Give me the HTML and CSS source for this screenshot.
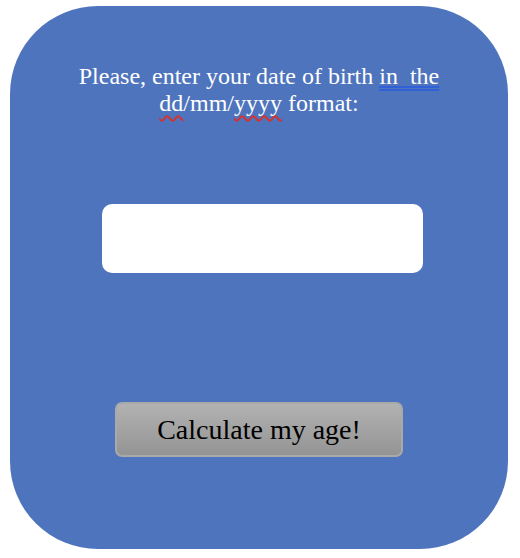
FILE: index.html
```html
<!DOCTYPE html>
<html lang="en">
<head>
  <meta charset="UTF-8">
  <title>Age Calculator</title>
  <link rel="stylesheet" href="styles.css">
</head>
<body>
  <div class="card">
    <p class="prompt">
      Please, enter your date of birth <span class="grammar">in&nbsp; the</span><br>
      <span class="spell">dd</span>/mm/<span class="spell">yyyy</span> format:
    </p>

    <input type="text" class="date-input" id="birth-date">

    <button class="calc-btn" onclick="calculate()">Calculate my age!</button>
  </div>

  <script>
    function calculate() {
      const value = document.getElementById('birth-date').value;
      const parts = value.split('/');
      if (parts.length !== 3) return;
      const born = new Date(parts[2], parts[1] - 1, parts[0]);
      const age = Math.floor((Date.now() - born) / (365.25 * 24 * 3600 * 1000));
      alert('You are ' + age + ' years old');
    }
  </script>
</body>
</html>
```

FILE: styles.css
```css
body {
  margin: 0;
  background: #fff;
  font-family: 'Liberation Serif', 'Times New Roman', serif;
}
.card {
  margin: 6px 12px 9px 10px;
  height: 543px;
  background: #4e74bd;
  border-radius: 88px;
  display: flex;
  flex-direction: column;
  align-items: center;
  box-sizing: border-box;
  padding-top: 57px;
}
.prompt {
  margin: 0;
  color: #fff;
  font-size: 24px;
  line-height: 27px;
  text-align: center;
}
.grammar {
  text-decoration: underline double #3160d8;
  text-decoration-thickness: 1.5px;
  text-underline-offset: 2px;
  text-decoration-skip-ink: none;
}
.spell {
  text-decoration: underline wavy #d9302a;
  text-decoration-thickness: 1.5px;
  text-underline-offset: 4px;
  text-decoration-skip-ink: none;
}
.date-input {
  margin: 87px 0 0 6px;
  width: 321px;
  height: 69px;
  border: none;
  border-radius: 10px;
  background: #fff;
  box-sizing: border-box;
  outline: none;
}
.calc-btn {
  margin-top: 129px;
  width: 288px;
  height: 55px;
  border: 2px solid #a9a9a9;
  border-radius: 7px;
  background: linear-gradient(#b2b2b2, #949494);
  font-family: inherit;
  font-size: 28px;
  color: #000;
  cursor: pointer;
}
```
